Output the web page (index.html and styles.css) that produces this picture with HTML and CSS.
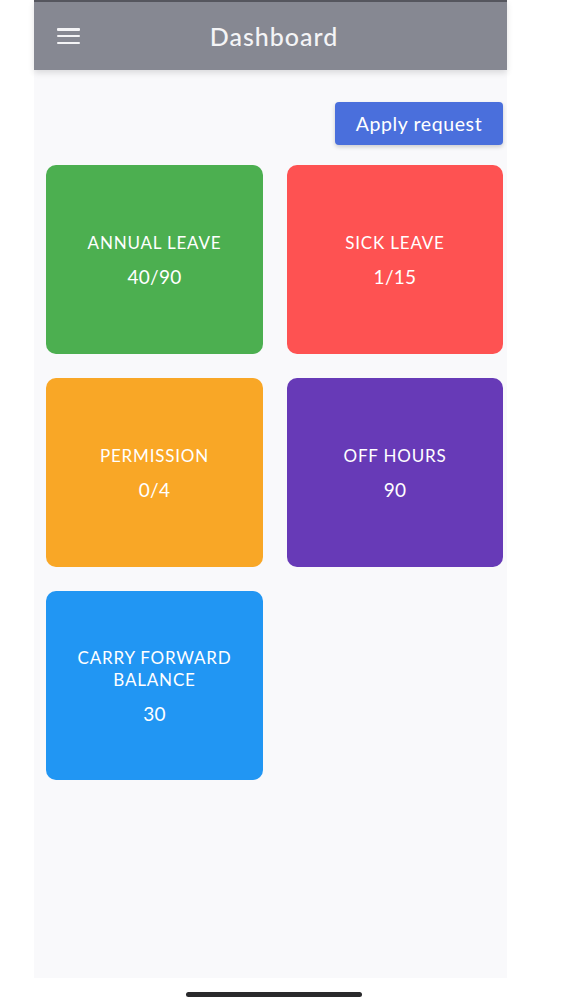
FILE: index.html
```html
<!doctype html>
<html lang="en">
<head>
  <meta charset="UTF-8" />
  <meta name="viewport" content="width=device-width, initial-scale=1" />
  <title>Dashboard</title>
  <link rel="stylesheet" href="styles.css">
</head>
<body>
  <div class="app">
    <header class="topbar">
      <button class="menu-btn" aria-label="Menu">
        <span></span><span></span><span></span>
      </button>
      <h1>Dashboard</h1>
    </header>

    <main class="content">
      <div class="actions">
        <button class="apply-btn">Apply request</button>
      </div>

      <div class="cards">
        <div class="card green">
          <div class="card-title">ANNUAL LEAVE</div>
          <div class="card-value">40/90</div>
        </div>
        <div class="card red">
          <div class="card-title">SICK LEAVE</div>
          <div class="card-value">1/15</div>
        </div>
        <div class="card orange">
          <div class="card-title">PERMISSION</div>
          <div class="card-value">0/4</div>
        </div>
        <div class="card purple">
          <div class="card-title">OFF HOURS</div>
          <div class="card-value">90</div>
        </div>
        <div class="card blue">
          <div class="card-title">CARRY FORWARD<br>BALANCE</div>
          <div class="card-value">30</div>
        </div>
      </div>
    </main>
  </div>

  <div class="home-bar"></div>
</body>
</html>
```

FILE: styles.css
```css
body {
  margin: 0;
  padding: 0;
  background: #ffffff;
  font-family: 'Lato', 'Noto Sans', sans-serif;
}
.app {
  width: 473px;
  height: 978px;
  margin-left: 34px;
  background: #f9f9fb;
  display: flex;
  flex-direction: column;
}
.topbar {
  height: 68px;
  border-top: 2px solid #55565e;
  background: #868892;
  display: flex;
  align-items: center;
  position: relative;
  box-shadow: 0 3px 6px rgba(0, 0, 0, 0.12);
}
.topbar h1 {
  flex: 1;
  margin: 0;
  text-align: center;
  color: #f4f4f6;
  font-size: 25px;
  font-weight: 500;
  letter-spacing: 1px;
  padding-left: 7px;
}
.menu-btn {
  position: absolute;
  left: 23px;
  top: 26px;
  width: 23px;
  height: 16px;
  padding: 0;
  border: none;
  background: transparent;
  display: flex;
  flex-direction: column;
  justify-content: space-between;
}
.menu-btn span {
  display: block;
  height: 2.5px;
  background: #f4f4f6;
  border-radius: 1px;
}
.content {
  padding: 32px 4px 0 12px;
}
.actions {
  display: flex;
  justify-content: flex-end;
}
.apply-btn {
  width: 168px;
  height: 43px;
  border: none;
  border-radius: 4px;
  background: #4a6fdc;
  color: #ffffff;
  font-family: inherit;
  font-size: 19.5px;
  letter-spacing: 0.6px;
  box-shadow: 0 2px 4px rgba(0, 0, 0, 0.18);
}
.cards {
  margin-top: 20px;
  display: grid;
  grid-template-columns: 217px 216px;
  column-gap: 24px;
  row-gap: 24px;
}
.card {
  height: 189px;
  border-radius: 10px;
  display: flex;
  flex-direction: column;
  align-items: center;
  justify-content: center;
  color: #ffffff;
  text-align: center;
}
.card-title {
  font-size: 17px;
  line-height: 22px;
  letter-spacing: 0.8px;
}
.card-value {
  margin-top: 12px;
  font-size: 19px;
  line-height: 22px;
  letter-spacing: 0.3px;
}
.green { background: #4caf50; }
.red { background: #fe5252; }
.orange { background: #f9a726; }
.purple { background: #673ab7; }
.blue { background: #2196f3; }
.home-bar {
  width: 176px;
  height: 5px;
  margin: 14px 0 0 186px;
  border-radius: 3px;
  background: #2a2a2c;
}
```
